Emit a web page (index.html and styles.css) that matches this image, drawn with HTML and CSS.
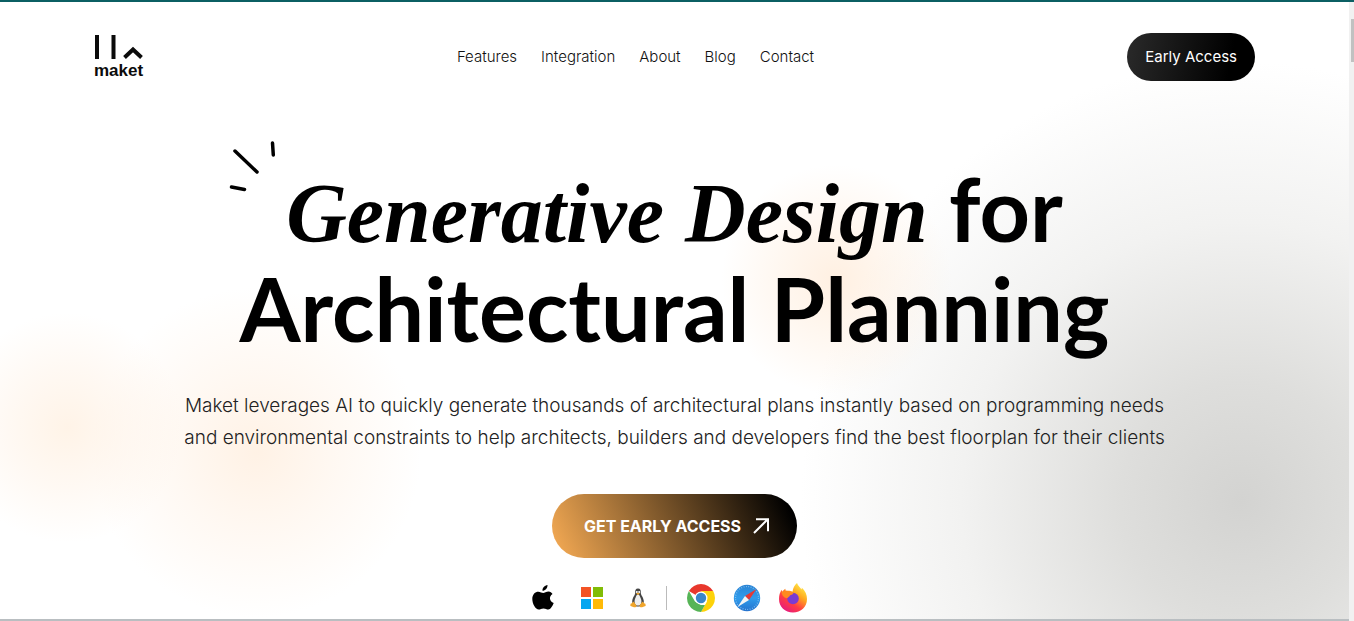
FILE: index.html
```html
<!DOCTYPE html>
<html lang="en">
<head>
  <meta charset="UTF-8">
  <meta name="viewport" content="width=device-width, initial-scale=1.0">
  <title>Maket</title>
  <link rel="stylesheet" href="styles.css">
</head>
<body>
  <div class="page">
    <!-- Header -->
    <header class="header">
      <a href="#" class="logo">
        <svg width="49" height="26" viewBox="0 0 49 26" aria-hidden="true">
          <path d="M3 1v24M19.500 1v24" fill="none" stroke="#0b0b0b" stroke-width="4"/>
          <path d="M30.500 23.500 39 15.500l8.500 8" fill="none" stroke="#0b0b0b" stroke-width="4"/>
        </svg>
        <span>maket</span>
      </a>
      <nav class="nav">
        <a href="#features">Features</a>
        <a href="#integration">Integration</a>
        <a href="#about">About</a>
        <a href="#blog">Blog</a>
        <a href="#contact">Contact</a>
      </nav>
      <button type="button" class="btn-dark">Early Access</button>
    </header>

    <!-- Hero -->
    <main class="hero">
      <h1 class="title">
        <svg class="sparks" width="48" height="52" viewBox="0 0 48 52" aria-hidden="true">
          <path d="M7 11 29 32M44.500 3l.8 12M3.500 47l13 2.500" fill="none" stroke="#000" stroke-width="3.500" stroke-linecap="round"/>
        </svg>
        <em>Generative Design</em> for<br>Architectural Planning
      </h1>
      <p class="lead">Maket leverages AI to quickly generate thousands of architectural plans instantly based on programming needs<br>and environmental constraints to help architects, builders and developers find the best floorplan for their clients</p>
      <button type="button" class="btn-gold">
        GET EARLY ACCESS
        <svg width="16" height="16" viewBox="0 0 16 16" aria-hidden="true">
          <path d="M1 15 14.500 1.500M3 1.200h12v12" fill="none" stroke="#fff" stroke-width="2"/>
        </svg>
      </button>

      <!-- Supported systems and browsers -->
      <div class="platforms">
        <div class="systems">
          <svg width="22" height="26" viewBox="0 0 22 26" role="img" aria-label="macOS">
            <path d="M15.500 0c.2 3-2.200 5.800-5 5.800C10.200 3 12.700.5 15.500 0zM20.500 9c-3.800 2.300-3.200 7.500 1.200 9-1 2.800-3.200 6.500-5.400 6.500-1.900 0-2.500-1.100-4.800-1.100s-3 1.100-4.700 1.100C3.500 24.500.3 18.800.3 14c0-4.800 3-7.300 6-7.300 2 0 3.600 1.300 4.900 1.300 1.200 0 3.100-1.400 5.500-1.400 1.500 0 2.900.9 3.800 2.400z"/>
          </svg>
          <svg width="22" height="22" viewBox="0 0 22 22" role="img" aria-label="Windows">
            <path fill="#f35325" d="M0 0h10v10H0z"/>
            <path fill="#81bc06" d="M12 0h10v10H12z"/>
            <path fill="#05a6f0" d="M0 12h10v10H0z"/>
            <path fill="#ffba08" d="M12 12h10v10H12z"/>
          </svg>
          <svg width="16" height="20" viewBox="0 0 16 20" role="img" aria-label="Linux">
            <path fill="#444" d="M8 .5c-2.400 0-3 1.800-2.800 4.200.1 2.300-2.700 4.500-3 8.300-.2 3 2 5.500 5.800 5.500s6-2.500 5.800-5.500c-.3-3.800-3.100-6-3-8.300C11 2.300 10.400.5 8 .5z"/>
            <path fill="#eee" d="M8 6.500c-1.500 0-1.700 1.500-2.500 3.200-1 2-1.200 3.800-.7 5.500.5 1.500 1.500 2.300 3.200 2.300s2.700-.8 3.200-2.300c.5-1.700.3-3.500-.7-5.500C9.700 8 9.500 6.500 8 6.500z"/>
            <circle cx="6.800" cy="4" r="1" fill="#fff"/>
            <circle cx="9.200" cy="4" r="1" fill="#fff"/>
            <path fill="#f0a52b" d="M6 5.600 8 4.700l2 .9-2 1.400zM3.500 13.500l3 4c0 1.800-1.600 2.300-3.300 1.500L.5 18c-.5-.5.2-1.300 0-2.300 1.300-.2 2-1.200 3-2.200zM12.500 13.500l-3 4c0 1.800 1.600 2.300 3.300 1.500l2.700-1c.5-.5-.2-1.300 0-2.300-1.300-.2-2-1.200-3-2.200z"/>
          </svg>
        </div>
        <span class="divider"></span>
        <div class="browsers">
          <svg width="28" height="28" viewBox="0 0 28 28" role="img" aria-label="Chrome">
            <path fill="#e8372c" d="M14 14 1.880 7A14 14 0 0 1 26.120 7z"/>
            <path fill="#fdd20a" d="M14 7H26.120A14 14 0 0 1 14 28L20 17.500z"/>
            <path fill="#56b456" d="M1.880 7 8 17.500 14 21h4L14 28A14 14 0 0 1 1.880 7z"/>
            <circle cx="14" cy="14" r="6.500" fill="#fff"/>
            <circle cx="14" cy="14" r="5.200" fill="#3a85c9"/>
          </svg>
          <svg width="28" height="28" viewBox="0 0 28 28" role="img" aria-label="Safari">
            <defs>
              <linearGradient id="safari" x2="0" y2="1">
                <stop stop-color="#2a83d4"/>
                <stop offset=".5" stop-color="#2f9cec"/>
                <stop offset="1" stop-color="#2673ce"/>
              </linearGradient>
            </defs>
            <circle cx="14" cy="14" r="13.200" fill="url(#safari)"/>
            <circle cx="14" cy="14" r="11.500" fill="none" stroke="#8cc5f0" stroke-width="1.200" stroke-dasharray=".8 1.600"/>
            <path fill="#e53935" d="M23.500 5 12 12l4 4z"/>
            <path fill="#f4f4f4" d="M4.500 23 12 12l4 4z"/>
          </svg>
          <svg width="28" height="30" viewBox="0 0 28 30" role="img" aria-label="Firefox">
            <defs>
              <linearGradient id="fox" x1=".85" y1=".05" x2=".2" y2="1">
                <stop stop-color="#fff04a"/>
                <stop offset=".35" stop-color="#ffa51f"/>
                <stop offset=".65" stop-color="#ff3d43"/>
                <stop offset="1" stop-color="#e31587"/>
              </linearGradient>
            </defs>
            <path fill="url(#fox)" d="M18 0c1 3 3.200 4.400 4.500 6.400.4-.6.400-1.200.2-1.900C26.500 8 28 12 28 16c0 8-6 13.500-14 13.500S0 24 0 16c0-3.500 1-7 2.700-9.200L3.200 9C4 7.500 5 6.500 6.300 5.700L6.800 8c2.200-.6 5-.3 6.700.7C14 5 15.500 2 18 0z"/>
            <circle cx="14" cy="15.500" r="5.800" fill="#7a3bd2"/>
            <path fill="#ff8a1f" d="M2.700 9c3.300-1.800 6-1.500 8.500.5 1.700 0 2.500 0 3.300.5-.6 1.400-2 2-3.500 2.200-.3 1.500-1.700 1.700-2.800 3C5.500 15 3 13 2.700 9z"/>
          </svg>
        </div>
      </div>
    </main>
  </div>
  <div class="scrollbar"><div class="thumb"></div></div>
</body>
</html>
```

FILE: styles.css
```css
* {
  box-sizing: border-box;
}
body {
  margin: 0;
  min-height: 100vh;
  display: flex;
  border-top: 2px solid #0b5f63;
  font-family: Inter, sans-serif;
  color: #000;
  overflow: hidden;
}
.page {
  flex: 1;
  border-bottom: 2px solid #b9bec1;
  background:
    radial-gradient(circle at 5% 69%, rgba(255, 232, 208, 0.5), rgba(255, 240, 226, 0.4) 60px, transparent 115px),
    radial-gradient(circle at 19% 73%, rgba(255, 236, 218, 0.7), rgba(255, 242, 230, 0.5) 80px, transparent 165px),
    radial-gradient(circle at 62% 45%, rgba(255, 236, 218, 0.8), transparent 115px),
    radial-gradient(circle at 92% 81%, #d3d3d1, #dededc 120px, #f2f2f1 280px, rgba(255, 255, 255, 0) 440px),
    #fff;
}
.header {
  display: grid;
  grid-template-columns: 1fr auto 1fr;
  align-items: center;
  padding: 29px 94px 0;
}
.logo {
  display: flex;
  flex-direction: column;
  padding-top: 3px;
  color: #0b0b0b;
  font-family: "Liberation Sans", sans-serif;
  font-size: 17px;
  font-weight: bold;
  line-height: 22px;
  text-decoration: none;
}
.nav {
  display: flex;
  gap: 24px;
  padding-right: 78px;
}
.nav a {
  color: #111;
  font-size: 15px;
  font-weight: 300;
  text-decoration: none;
}
button {
  border: 0;
  color: #fff;
  font-family: inherit;
  cursor: pointer;
}
.btn-dark {
  justify-self: end;
  height: 48px;
  padding: 0 18px;
  border-radius: 24px;
  background: linear-gradient(100deg, #2a2a2a, #000 80%);
  font-size: 15px;
}
.hero {
  display: flex;
  flex-direction: column;
  align-items: center;
  padding-top: 76px;
}
.title {
  position: relative;
  margin: 0;
  font-family: Lato, sans-serif;
  font-size: 88px;
  font-weight: 700;
  line-height: 100px;
  text-align: center;
  white-space: nowrap;
}
.title em {
  font-family: "Liberation Serif", serif;
  font-size: 84px;
  line-height: 1;
}
.sparks {
  position: absolute;
  top: -18px;
  left: -12px;
}
.lead {
  margin: 32px 0 0;
  color: #222;
  font-size: 19px;
  font-weight: 300;
  line-height: 32px;
  text-align: center;
  white-space: nowrap;
}
.btn-gold {
  display: flex;
  align-items: center;
  gap: 12px;
  height: 64px;
  margin-top: 40px;
  padding: 0 28px 0 32px;
  border-radius: 32px;
  background: linear-gradient(65deg, #f9ad55, #000 95%);
  font-size: 16px;
  font-weight: 700;
}
.platforms {
  display: flex;
  align-items: center;
  gap: 20px;
  margin-top: 25px;
  padding-right: 10px;
}
.systems,
.browsers {
  display: flex;
  align-items: center;
  gap: 18px;
}
.systems {
  gap: 27px;
}
.divider {
  width: 1px;
  height: 24px;
  background: #bbb;
}
.scrollbar {
  width: 5px;
  background: #f1f1f1;
}
.thumb {
  width: 3px;
  height: 43px;
  margin: 17px 0 0 2px;
  background: #c1c1c1;
}
```
